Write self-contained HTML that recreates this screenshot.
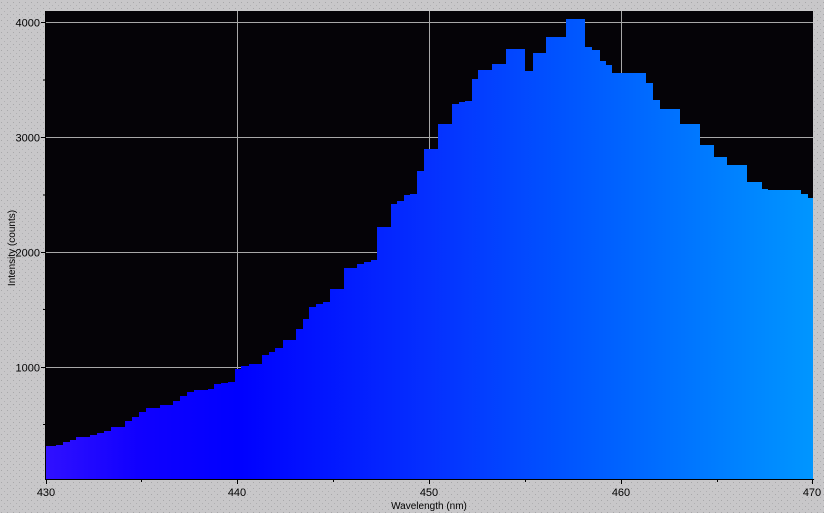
<!DOCTYPE html>
<html><head><meta charset="utf-8"><style>
html,body{margin:0;padding:0;width:824px;height:513px;overflow:hidden;background:#c8c7c9;font-family:"Liberation Sans",sans-serif;}
</style></head><body>
<svg width="824" height="513" viewBox="0 0 824 513" xmlns="http://www.w3.org/2000/svg">
<defs>
<linearGradient id="g" x1="46" x2="813" y1="0" y2="0" gradientUnits="userSpaceOnUse">
<stop offset="0" stop-color="#3010ff"/>
<stop offset="0.12" stop-color="#1000ff"/>
<stop offset="0.25" stop-color="#0000ff"/>
<stop offset="0.5" stop-color="#0530ff"/>
<stop offset="0.68" stop-color="#0055ff"/>
<stop offset="0.85" stop-color="#0078ff"/>
<stop offset="1" stop-color="#0096ff"/>
</linearGradient>
<pattern id="d" width="6" height="6" patternUnits="userSpaceOnUse"><rect x="1" y="2" width="1" height="1" fill="#a8a8aa"/><rect x="4" y="5" width="1" height="1" fill="#b0b0b2"/></pattern>
</defs>
<rect width="824" height="513" fill="url(#d)"/>
<rect x="46" y="11" width="767" height="468" fill="#050307"/>
<g stroke="#a8a8a8" stroke-width="1">
<line x1="46" x2="813" y1="22.5" y2="22.5"/>
<line x1="46" x2="813" y1="137.5" y2="137.5"/>
<line x1="46" x2="813" y1="252.5" y2="252.5"/>
<line x1="46" x2="813" y1="367.5" y2="367.5"/>
<line x1="237.5" x2="237.5" y1="11" y2="479"/>
<line x1="429.5" x2="429.5" y1="11" y2="479"/>
<line x1="621.5" x2="621.5" y1="11" y2="479"/>
</g>
<path fill="url(#g)" d="M46 479 V446 H56 V445 H63 V442 H70 V440 H76 V437 H90 V435 H97 V433 H104 V431 H111 V427 H125 V421 H132 V417 H139 V412 H146 V408 H160 V405 H173 V401 H180 V396 H187 V392 H194 V390 H208 V389 H214 V384 H221 V383 H228 V382 H235 V369 H241 V366 H249 V364 H262 V355 H269 V352 H275 V348 H283 V340 H296 V329 H303 V319 H309 V307 H316 V304 H323 V302 H330 V289 H344 V268 H357 V264 H364 V262 H371 V260 H377 V227 H391 V204 H397 V201 H404 V195 H410 V194 H417 V171 H424 V149 H438 V124 H452 V104 H459 V102 H465 V101 H472 V79 H478 V70 H492 V64 H506 V49 H525 V71 H533 V53 H546 V37 H566 V19 H585 V47 H592 V50 H600 V61 H606 V65 H612 V73 H646 V83 H653 V100 H660 V109 H680 V124 H700 V145 H714 V157 H727 V165 H747 V182 H762 V189 H768 V190 H801 V194 H808 V198 H813 V479 Z"/>
<line x1="45.5" x2="45.5" y1="11" y2="480" stroke="#000"/>
<line x1="45" x2="814" y1="479.5" y2="479.5" stroke="#000"/>
<g stroke="#000">
<line x1="41" x2="46" y1="22.5" y2="22.5"/><line x1="41" x2="46" y1="137.5" y2="137.5"/><line x1="41" x2="46" y1="252.5" y2="252.5"/><line x1="41" x2="46" y1="367.5" y2="367.5"/>
<line x1="43" x2="46" y1="80" y2="80"/><line x1="43" x2="46" y1="195" y2="195"/><line x1="43" x2="46" y1="309.5" y2="309.5"/><line x1="43" x2="46" y1="424.5" y2="424.5"/>
<line x1="46.5" x2="46.5" y1="479" y2="484"/><line x1="237.5" x2="237.5" y1="479" y2="484"/><line x1="429.5" x2="429.5" y1="479" y2="484"/><line x1="621.5" x2="621.5" y1="479" y2="484"/><line x1="812.5" x2="812.5" y1="479" y2="484"/>
<line x1="141.5" x2="141.5" y1="479" y2="482"/><line x1="333.5" x2="333.5" y1="479" y2="482"/><line x1="525.5" x2="525.5" y1="479" y2="482"/><line x1="717.5" x2="717.5" y1="479" y2="482"/>
</g>
<g font-size="11" fill="#000">
<text x="40" y="26.5" text-anchor="end">4000</text>
<text x="40" y="141.5" text-anchor="end">3000</text>
<text x="40" y="256.5" text-anchor="end">2000</text>
<text x="40" y="371.5" text-anchor="end">1000</text>
<text x="46" y="496" text-anchor="middle">430</text>
<text x="237" y="496" text-anchor="middle">440</text>
<text x="429" y="496" text-anchor="middle">450</text>
<text x="621" y="496" text-anchor="middle">460</text>
<text x="812" y="496" text-anchor="middle">470</text>
<text x="429" y="509" text-anchor="middle" font-size="10">Wavelength (nm)</text>
<text transform="translate(15 248) rotate(-90)" text-anchor="middle" font-size="10">Intensity (counts)</text>
</g>
</svg>
</body></html>
